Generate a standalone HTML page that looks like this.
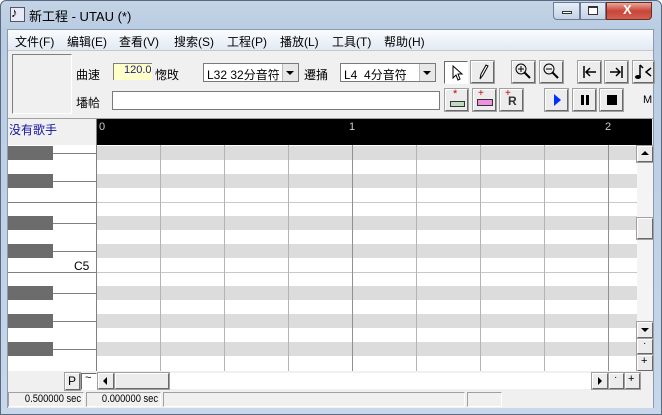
<!DOCTYPE html>
<html><head><meta charset="utf-8"><style>
*{margin:0;padding:0;box-sizing:border-box}
body{width:662px;height:415px;overflow:hidden;background:#fff;font-family:"Liberation Sans","Noto Sans CJK SC",sans-serif;font-size:12px;position:relative}
.a{position:absolute}
.b2{position:absolute;width:23px;height:22px;background:#ececec;border-top:1px solid #fff;border-left:1px solid #fff;border-right:1px solid #696969;border-bottom:1px solid #696969;outline:1px solid #a0a0a0}
.t{position:absolute;white-space:nowrap}
.st{position:absolute;white-space:nowrap;font-size:11px;transform:scaleX(0.85);transform-origin:right top;text-align:right}
</style></head><body>
<div class="a" style="left:0;top:0;width:662px;height:415px;background:linear-gradient(#c4d4e6,#b9cce2 30px,#c8d7ea);border:1px solid #5a6a80;border-radius:6px 6px 0 0"></div>
<div class="a" style="left:10px;top:7px;width:15px;height:15px;background:#e8e8f8;border:1px solid #556"></div>
<div class="t" style="left:11px;top:5px;font-size:13px;color:#000">♪</div>
<div class="t" style="left:29px;top:6px;font-size:13px">新工程 - UTAU (*)</div>
<div class="a" style="left:553px;top:2px;width:27px;height:18px;border:1px solid #6c7c94;border-radius:0 0 0 4px;background:linear-gradient(#e6eef8,#c4d2e6)"></div>
<div class="a" style="left:562px;top:11px;width:10px;height:3px;border:1px solid #333;background:#fff"></div>
<div class="a" style="left:580px;top:2px;width:26px;height:18px;border:1px solid #6c7c94;background:linear-gradient(#e6eef8,#c4d2e6)"></div>
<div class="a" style="left:588px;top:6px;width:10px;height:9px;border:1px solid #333;border-top-width:2px;background:#fff"></div>
<div class="a" style="left:606px;top:2px;width:46px;height:18px;border:1px solid #6c2a20;border-radius:0 0 4px 0;background:linear-gradient(#e8a898,#c8453a 50%,#d06050)"></div>
<div class="t" style="left:623px;top:2px;color:#fff;font-weight:bold;font-size:13px">X</div>
<div class="a" style="left:7px;top:29px;width:647px;height:379px;background:#f0f0f0;border:1px solid #8a9ab0"></div>
<div class="a" style="left:8px;top:30px;width:645px;height:20px;background:linear-gradient(#fafcfe,#e3eaf4)"></div>
<div class="t" style="left:15px;top:33px">文件(F)</div>
<div class="t" style="left:67px;top:33px">编辑(E)</div>
<div class="t" style="left:119px;top:33px">查看(V)</div>
<div class="t" style="left:174px;top:33px">搜索(S)</div>
<div class="t" style="left:227px;top:33px">工程(P)</div>
<div class="t" style="left:280px;top:33px">播放(L)</div>
<div class="t" style="left:332px;top:33px">工具(T)</div>
<div class="t" style="left:384px;top:33px">帮助(H)</div>
<div class="a" style="left:8px;top:50px;width:645px;height:1px;background:#c8c8c8"></div>
<div class="a" style="left:12px;top:54px;width:60px;height:60px;border:1px solid;border-color:#808080 #fff #fff #808080;background:#f0f0f0"></div>
<div class="t" style="left:76px;top:66px">曲速</div>
<div class="a" style="left:113px;top:63px;width:39px;height:17px;background:#ffffc8;border-top:1px solid #808080;border-left:1px solid #808080"></div>
<div class="t" style="left:124px;top:64px;color:#1a1a80;font-size:11px">120.0</div>
<div class="t" style="left:155px;top:66px">愡攺</div>
<div class="a" style="left:203px;top:63px;width:96px;height:19px;background:#fff;border:1px solid #7a7a7a"></div>
<div class="t" style="left:207px;top:66px">L32 32分音符</div>
<div class="a" style="left:282px;top:64px;width:16px;height:17px;background:#e8e8e8;border-left:1px solid #bbb"></div>
<div class="a" style="left:286px;top:71px;border:4px solid transparent;border-top:4px solid #000"></div>
<div class="t" style="left:304px;top:66px">遷捅</div>
<div class="a" style="left:340px;top:63px;width:96px;height:19px;background:#fff;border:1px solid #7a7a7a"></div>
<div class="t" style="left:344px;top:66px">L4 &nbsp;4分音符</div>
<div class="a" style="left:419px;top:64px;width:16px;height:17px;background:#e8e8e8;border-left:1px solid #bbb"></div>
<div class="a" style="left:423px;top:71px;border:4px solid transparent;border-top:4px solid #000"></div>
<div class="t" style="left:76px;top:94px">墦帢</div>
<div class="a" style="left:112px;top:91px;width:328px;height:19px;background:#fff;border:1px solid #7a7a7a"></div>
<div class="a" style="left:444px;top:61px;width:24px;height:23px;background:#fff;border:1px solid;border-color:#696969 #fff #fff #696969"></div>
<svg class="a" style="left:444px;top:61px" width="24" height="23"><path d="M9 5 L9 17 L12 14 L14 19 L16 18 L14 13 L18 13 Z" fill="#fff" stroke="#000"/></svg>
<div class="b2" style="left:471px;top:61px"></div>
<svg class="a" style="left:471px;top:61px" width="23" height="22"><path d="M9 18 L10 13 L15 4 L17 5 L12 14 Z" fill="#fff" stroke="#000"/></svg>
<div class="b2" style="left:512px;top:61px"></div>
<svg class="a" style="left:512px;top:61px" width="23" height="22"><circle cx="9" cy="8" r="5" fill="none" stroke="#000"/><path d="M12 11 L18 17" stroke="#000" stroke-width="2"/><path d="M6 8h6M9 5v6" stroke="#000"/></svg>
<div class="b2" style="left:540px;top:61px"></div>
<svg class="a" style="left:540px;top:61px" width="23" height="22"><circle cx="9" cy="8" r="5" fill="none" stroke="#000"/><path d="M12 11 L18 17" stroke="#000" stroke-width="2"/><path d="M6 8h6" stroke="#000"/></svg>
<div class="b2" style="left:578px;top:61px"></div>
<svg class="a" style="left:578px;top:61px" width="23" height="22"><path d="M6 5v12M8 11h10M12 7 L8 11 L12 15" stroke="#000" stroke-width="1.5" fill="none"/></svg>
<div class="b2" style="left:605px;top:61px"></div>
<svg class="a" style="left:605px;top:61px" width="23" height="22"><path d="M17 5v12M5 11h10M11 7 L15 11 L11 15" stroke="#000" stroke-width="1.5" fill="none"/></svg>
<div class="b2" style="left:633px;top:61px;width:21px"></div>
<svg class="a" style="left:633px;top:61px" width="21" height="22"><path d="M7 4v12" stroke="#000" stroke-width="1.5"/><ellipse cx="5" cy="16" rx="3" ry="2" fill="#000"/><path d="M7 4 L10 7M18 7 L13 11 L18 15" stroke="#000" stroke-width="1.5" fill="none"/></svg>
<div class="b2" style="left:445px;top:89px"></div>
<div class="a" style="left:450px;top:101px;width:15px;height:6px;border:1px solid #333;background:#bfd8c0"></div><div class="t" style="left:453px;top:88px;color:#c00;font-size:11px">*</div>
<div class="b2" style="left:473px;top:89px"></div>
<div class="a" style="left:477px;top:99px;width:16px;height:7px;border:1px solid #333;background:#f090e0"></div><div class="t" style="left:478px;top:88px;color:#c00;font-size:10px">+</div>
<div class="b2" style="left:500px;top:89px"></div>
<div class="t" style="left:505px;top:88px;color:#c00;font-size:10px">+</div><div class="t" style="left:508px;top:94px;font-weight:bold;font-size:12px;color:#333">R</div>
<div class="b2" style="left:545px;top:89px"></div>
<div class="a" style="left:554px;top:94px;border:6px solid transparent;border-left:7px solid #0030ff;border-right:0"></div>
<div class="b2" style="left:573px;top:89px"></div>
<div class="a" style="left:581px;top:95px;width:3px;height:10px;background:#000"></div><div class="a" style="left:586px;top:95px;width:3px;height:10px;background:#000"></div>
<div class="b2" style="left:600px;top:89px"></div>
<div class="a" style="left:607px;top:95px;width:10px;height:10px;background:#000"></div>
<div class="t" style="left:643px;top:94px;font-size:11px">M</div>
<div class="a" style="left:8px;top:118px;width:645px;height:1px;background:#a0a0a0"></div>
<div class="a" style="left:8px;top:119px;width:89px;height:26px;background:#f0f0f0;border-right:1px solid #808080"></div>
<div class="t" style="left:9px;top:121px;color:#1010a0;font-size:12px">没有歌手</div>
<div class="a" style="left:97px;top:119px;width:555px;height:26px;background:#000"></div>
<div class="t" style="left:99px;top:121px;color:#ccc;font-size:11px">0</div>
<div class="t" style="left:349px;top:121px;color:#ccc;font-size:11px">1</div>
<div class="t" style="left:605px;top:121px;color:#ccc;font-size:11px">2</div>
<div class="a" style="left:8px;top:145px;width:89px;height:226px;background:#fff;border-right:1px solid #808080;overflow:hidden">
<svg width="89" height="226" style="position:absolute;left:0;top:0">
<g fill="#6c6c6c"><rect x="0" y="1" width="45" height="14"/><rect x="0" y="29" width="45" height="14"/><rect x="0" y="71" width="45" height="14"/><rect x="0" y="99" width="45" height="14"/><rect x="0" y="141" width="45" height="14"/><rect x="0" y="169" width="45" height="14"/><rect x="0" y="197" width="45" height="14"/></g>
<g stroke="#808080"><line x1="45" y1="8.5" x2="89" y2="8.5"/><line x1="45" y1="36.5" x2="89" y2="36.5"/><line x1="0" y1="57.5" x2="89" y2="57.5"/><line x1="45" y1="78.5" x2="89" y2="78.5"/><line x1="45" y1="106.5" x2="89" y2="106.5"/><line x1="0" y1="127.5" x2="89" y2="127.5"/><line x1="45" y1="148.5" x2="89" y2="148.5"/><line x1="45" y1="176.5" x2="89" y2="176.5"/><line x1="45" y1="204.5" x2="89" y2="204.5"/></g>
</svg>
<div class="t" style="left:66px;top:114px;font-size:12px">C5</div>
</div>
<div class="a" style="left:97px;top:145px;width:540px;height:226px;background:#fff;overflow:hidden">
<svg width="540" height="226" style="position:absolute;left:0;top:0">
<g fill="#dcdcdc"><rect x="0" y="1" width="540" height="14"/><rect x="0" y="29" width="540" height="14"/><rect x="0" y="71" width="540" height="14"/><rect x="0" y="99" width="540" height="14"/><rect x="0" y="141" width="540" height="14"/><rect x="0" y="169" width="540" height="14"/><rect x="0" y="197" width="540" height="14"/></g>
<g stroke="#c8c8c8"><line x1="0" y1="57.5" x2="540" y2="57.5"/><line x1="0" y1="127.5" x2="540" y2="127.5"/></g>
<g stroke="#b4b4b4"><line x1="63.5" y1="0" x2="63.5" y2="226"/><line x1="127.5" y1="0" x2="127.5" y2="226"/><line x1="191.5" y1="0" x2="191.5" y2="226"/><line x1="319.5" y1="0" x2="319.5" y2="226"/><line x1="383.5" y1="0" x2="383.5" y2="226"/><line x1="447.5" y1="0" x2="447.5" y2="226"/></g>
<g stroke="#909090"><line x1="255.5" y1="0" x2="255.5" y2="226"/><line x1="511.5" y1="0" x2="511.5" y2="226"/></g>
</svg></div>
<div class="a" style="left:637px;top:145px;width:16px;height:226px;background:#f4f4f4"></div>
<div class="b2" style="left:637px;top:146px;width:16px;height:16px"></div><div class="a" style="left:641px;top:151px;border:4px solid transparent;border-bottom:4px solid #000;border-top:0"></div>
<div class="b2" style="left:637px;top:218px;width:16px;height:21px"></div>
<div class="b2" style="left:637px;top:322px;width:16px;height:16px"></div><div class="a" style="left:641px;top:328px;border:4px solid transparent;border-top:4px solid #000;border-bottom:0"></div>
<div class="b2" style="left:637px;top:339px;width:16px;height:15px"></div><div class="t" style="left:643px;top:338px;font-size:10px">·</div>
<div class="b2" style="left:637px;top:355px;width:16px;height:16px"></div><div class="t" style="left:641px;top:355px;font-size:11px">+</div>
<div class="a" style="left:8px;top:371px;width:645px;height:20px;background:#f0f0f0"></div>
<div class="b2" style="left:65px;top:373px;width:15px;height:17px"></div><div class="t" style="left:68px;top:374px">P</div>
<div class="a" style="left:81px;top:373px;width:16px;height:17px;background:#fff;border:1px solid;border-color:#696969 #fff #fff #696969"></div><div class="t" style="left:85px;top:372px;font-size:11px">~</div>
<div class="a" style="left:98px;top:373px;width:510px;height:16px;background:#fff"></div>
<div class="b2" style="left:98px;top:373px;width:16px;height:16px"></div><div class="a" style="left:103px;top:377px;border:4px solid transparent;border-right:4px solid #000;border-left:0"></div>
<div class="b2" style="left:115px;top:373px;width:54px;height:16px"></div>
<div class="b2" style="left:592px;top:373px;width:16px;height:16px"></div><div class="a" style="left:598px;top:377px;border:4px solid transparent;border-left:4px solid #000;border-right:0"></div>
<div class="b2" style="left:609px;top:373px;width:15px;height:16px"></div><div class="t" style="left:614px;top:372px;font-size:10px">·</div>
<div class="b2" style="left:625px;top:373px;width:15px;height:16px"></div><div class="t" style="left:628px;top:373px;font-size:11px">+</div>
<div class="a" style="left:8px;top:391px;width:645px;height:17px;background:#f0f0f0"></div>
<div class="a" style="left:8px;top:392px;width:76px;height:15px;border:1px solid;border-color:#a0a0a0 #fff #fff #a0a0a0"></div>
<div class="st" style="right:581px;top:393px">0.500000 sec</div>
<div class="a" style="left:86px;top:392px;width:75px;height:15px;border:1px solid;border-color:#a0a0a0 #fff #fff #a0a0a0"></div>
<div class="st" style="right:504px;top:393px">0.000000 sec</div>
<div class="a" style="left:163px;top:392px;width:302px;height:15px;border:1px solid;border-color:#a0a0a0 #fff #fff #a0a0a0"></div>
<div class="a" style="left:467px;top:392px;width:35px;height:15px;border:1px solid;border-color:#a0a0a0 #fff #fff #a0a0a0"></div>
</body></html>
